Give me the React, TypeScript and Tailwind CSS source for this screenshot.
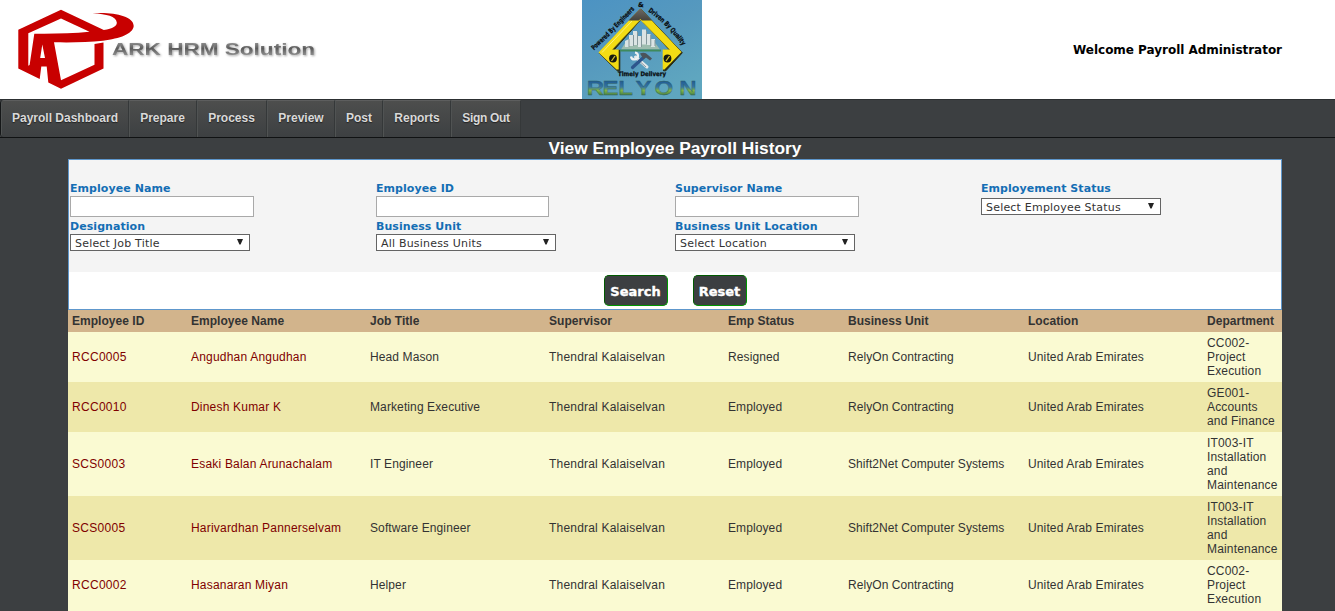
import React from "react";

const NAV = [
  { label: "Payroll Dashboard", w: "w-[128px]" },
  { label: "Prepare", w: "w-[68px] pr-px" },
  { label: "Process", w: "w-[70px] pr-px" },
  { label: "Preview", w: "w-[68px]" },
  { label: "Post", w: "w-[48px]" },
  { label: "Reports", w: "w-[68px]" },
  { label: "Sign Out", w: "w-[70px] tracking-[-0.3px]" },
];

const HEAD = ["Employee ID", "Employee Name", "Job Title", "Supervisor", "Emp Status", "Business Unit", "Location", "Department"];

const ROWS = [
  ["RCC0005", "Angudhan Angudhan", "Head Mason", "Thendral Kalaiselvan", "Resigned", "RelyOn Contracting", "United Arab Emirates", "CC002-\nProject\nExecution"],
  ["RCC0010", "Dinesh Kumar K", "Marketing Executive", "Thendral Kalaiselvan", "Employed", "RelyOn Contracting", "United Arab Emirates", "GE001-\nAccounts\nand Finance"],
  ["SCS0003", "Esaki Balan Arunachalam", "IT Engineer", "Thendral Kalaiselvan", "Employed", "Shift2Net Computer Systems", "United Arab Emirates", "IT003-IT\nInstallation\nand\nMaintenance"],
  ["SCS0005", "Harivardhan Pannerselvam", "Software Engineer", "Thendral Kalaiselvan", "Employed", "Shift2Net Computer Systems", "United Arab Emirates", "IT003-IT\nInstallation\nand\nMaintenance"],
  ["RCC0002", "Hasanaran Miyan", "Helper", "Thendral Kalaiselvan", "Employed", "RelyOn Contracting", "United Arab Emirates", "CC002-\nProject\nExecution"],
];

const CELL = [
  "text-[#800000] tracking-[0.3px]",
  "text-[#800000] tracking-[0.2px]",
  "tracking-[0.11px]",
  "tracking-[0.2px]",
  "tracking-[0.1px]",
  "tracking-[0.06px]",
  "tracking-[0.13px]",
  "tracking-[0.17px]",
];

const GRID = "grid grid-cols-[119px_179px_179px_179px_120px_180px_179px_79px] items-center pl-1";

function ArkLogo() {
  return (
    <svg width="330" height="98" viewBox="0 0 330 98" className="shrink-0">
      <defs>
        <linearGradient id="steel" x1="0" y1="0" x2="0" y2="1">
          <stop offset="0.2" stopColor="#8a8a8a" />
          <stop offset="0.5" stopColor="#5c5c5c" />
          <stop offset="0.85" stopColor="#8c8c8c" />
        </linearGradient>
      </defs>
      <path
        fill="#c80000"
        fillRule="evenodd"
        d="M18.300 29.700L61 9.700L103.800 30C113 28.500 117 26 116.800 22.500C116 16.500 107 14 92.500 13.300C112 11.800 133.700 15.500 133.700 26C133 34 120 38.500 103 40.700C88 42.500 70 42.500 54 42.300L61 80.300L94.500 64.700V44L103.500 42.500V68.500L61 88.800L48.300 82.500L46.700 66.500H41.300L39.700 79L18.300 68.500ZM28.300 33.200V65.700L29.600 65L34.300 33.700C52 33.800 72 33.800 89.500 31.800L61 18.500ZM42.300 44.500L40.200 58H45Z"
      />
      <text x="112" y="54.500" textLength="203" lengthAdjust="spacingAndGlyphs" fontFamily="Liberation Sans" fontWeight="bold" fontSize="16.500" fill="url(#steel)" className="drop-shadow-[1px_1px_1px_rgba(0,0,0,0.35)]">ARK HRM Solution</text>
    </svg>
  );
}

function RelyonLogo() {
  return (
    <svg width="120" height="99" viewBox="0 0 120 99" className="shrink-0">
      <defs>
        <linearGradient id="sky" x1="0" y1="0" x2="0.6" y2="1">
          <stop offset="0" stopColor="#4c93c3" />
          <stop offset="0.5" stopColor="#5699be" />
          <stop offset="1" stopColor="#5fa6bf" />
        </linearGradient>
        <linearGradient id="relyon" x1="0" y1="0" x2="0" y2="1">
          <stop offset="0.2" stopColor="#235f96" />
          <stop offset="0.42" stopColor="#3575a0" />
          <stop offset="0.58" stopColor="#82b446" />
          <stop offset="0.85" stopColor="#2f6a4a" />
        </linearGradient>
        <linearGradient id="cap" x1="0" y1="0" x2="0" y2="1">
          <stop offset="0" stopColor="#6e6a66" />
          <stop offset="1" stopColor="#45433c" />
        </linearGradient>
        <path id="leftArc" d="M12 50.500Q30 33.500 54 8" />
        <path id="rightArc" d="M66 11.500Q84 23 101 46.500" />
      </defs>
      <rect width="120" height="99" fill="url(#sky)" />
      <path d="M58.300 8.500L16.500 52.500L34.500 70H37V49.500H31L58.300 18.500L87 49.500H80.700V70H83L99.500 52Z" fill="#2a2c12" stroke="#2a2c12" transform="translate(0.800 0.800)" />
      <path d="M58.300 8.500L16.500 52.500L34.500 69.500H36.700V49.500H30.500L58.300 20L87.500 49.500H80.700V69.500H82.500L99.500 52Z" fill="#f3dc14" />
      <path d="M20 52.500L50 21" stroke="#fbf07a" strokeWidth="1" />
      <path d="M30.500 49.500L57 21.500M87.500 49.500L61 22.500" stroke="#8d7d12" strokeWidth="0.600" />
      <path d="M58.300 8.300L46.500 20.500H56.900L58.300 19L59.800 20.500H70Z" fill="url(#cap)" />
      <g fill="#17190f"><circle cx="31" cy="58.500" r="3.900" /><circle cx="85.500" cy="58.500" r="3.900" /></g>
      <path d="M29.500 61L33 56M84 61L87.500 56" stroke="#d8c32b" strokeWidth="1.300" />
      <path d="M45 40H71L78 49.500H39Z" fill="#9dbcae" />
      <path d="M43 41l4-2v8h-4zM47 35h4v11h-4zM51 31h4v14h-4zM56 36h3v11h-3zM60 29.500h4v15h-4zM65 34h3.500v11h-3.500zM69 39h4v8h-4z" fill="#dbe4e4" />
      <path d="M47 39v8M51.500 35v11M55.500 32v13M59.500 36v11M64.500 31v13M68.800 35v11M73 40v6" stroke="#84979b" strokeWidth="1" />
      <path d="M38 50.500H79" stroke="#3f8a5c" strokeWidth="1.800" />
      <path d="M53.500 57L65 67" stroke="#e3e8ea" strokeWidth="3" strokeLinecap="round" />
      <path d="M54.500 58.500L64 67" stroke="#8c989f" strokeWidth="1" />
      <path d="M62 57L50.500 67.500" stroke="#2d568c" strokeWidth="3.200" strokeLinecap="round" />
      <path d="M58 53.500Q63 51.500 66 55L70 58.500L68 60.500L64 57.500L61.500 59" fill="#4b535a" />
      <path d="M53 52.500A3.500 3.500 0 1 1 49 56.500" fill="none" stroke="#eef1f2" strokeWidth="2.200" />
      <g fontFamily="DejaVu Sans" fontWeight="bold" fontSize="6.800" fill="#080b0d" stroke="#080b0d" strokeWidth="0.250">
        <text><textPath href="#leftArc" textLength="58" lengthAdjust="spacingAndGlyphs">Powered By Engineers</textPath></text>
        <text x="56" y="6.500" fontSize="6.500">&amp;</text>
        <text><textPath href="#rightArc" textLength="49" lengthAdjust="spacingAndGlyphs">Driven By Quality</textPath></text>
        <text x="36" y="76" textLength="48" lengthAdjust="spacingAndGlyphs" fontSize="6.200">Timely Delivery</text>
      </g>
      <text transform="scale(1.200 1)" x="4 17 30.200 44.500 60.500 81" y="95.500" fontFamily="Liberation Sans" fontWeight="bold" fontSize="20" fill="url(#relyon)" stroke="#2c5d62" strokeWidth="0.300">RELYON</text>
    </svg>
  );
}

function Label({ children }: { children: React.ReactNode }) {
  return <div className="h-[14px] pt-px font-['DejaVu_Sans',sans-serif] text-[11px] leading-[14px] font-bold tracking-[0.06px] whitespace-nowrap text-[#146eb4]">{children}</div>;
}

function TextField({ label, w }: { label: string; w: string }) {
  return (
    <label className="block h-[38px]">
      <Label>{label}</Label>
      <input className={`mt-[1px] block h-[21px] border border-[#a9a9a9] bg-white ${w}`} />
    </label>
  );
}

function SelectField({ label, value, gap }: { label: string; value: string; gap: string }) {
  return (
    <div>
      <Label>{label}</Label>
      <div className={`flex h-[17px] w-[180px] items-center justify-between border border-[#646464] bg-white pr-[6px] pl-1 font-['DejaVu_Sans',sans-serif] text-[11px] leading-[15px] tracking-[0.2px] text-[#333] ${gap}`}>
        <span className="pt-[2px]">{value}</span>
        <svg width="6" height="7" viewBox="0 0 6 7" className="mb-[2px]"><path d="M0 1H6L3.600 6.500H2.400Z" fill="#222" /></svg>
      </div>
    </div>
  );
}

const BUTTON = "h-[31px] rounded-[5px] border border-t-[#005a00] border-r-[#009600] border-b-[#009600] border-l-[#005a00] bg-[#3c3f41] pt-[2px] [-webkit-text-stroke:0.35px_white]";

export default function App() {
  return (
    <div className="h-[611px] w-[1335px] overflow-hidden bg-[#3c3f41] font-['Liberation_Sans',Arial,sans-serif] text-xs text-[#333]">
      <header className="flex h-[99px] bg-white">
        <div className="w-[582px]"><ArkLogo /></div>
        <RelyonLogo />
        <div className="flex-1 pt-[42px] pr-[53px] text-right font-['DejaVu_Sans',sans-serif] text-xs leading-4 font-bold tracking-[-0.03px] text-black">Welcome Payroll Administrator</div>
      </header>

      <nav className="flex h-[39px] border-t border-b border-t-[#2c2f31] border-b-[#101213]">
        <div className="flex overflow-hidden rounded-l-[4px] border-l border-l-[#151718]">
          {NAV.map((item) => (
            <a key={item.label} className={`flex h-[37px] items-center justify-center border-t border-r border-l border-t-[#5d5e5e] border-r-[#353839] border-l-[#505353] bg-linear-to-b from-[#4d4e4d] to-[#3d4042] pb-[2px] font-bold whitespace-nowrap text-[#d9d9d9] [text-shadow:0_1px_1px_#222] ${item.w}`}>{item.label}</a>
          ))}
        </div>
      </nav>

      <main className="ml-[68px] w-[1214px]">
        <h1 className="h-[21px] text-center text-[17.33px] leading-[21px] font-bold text-white">View Employee Payroll History</h1>
        <section className="h-[151px] border border-[#5e97cc] bg-white">
          <div className="grid h-[112px] grid-cols-[306px_299px_306px_1fr] content-start bg-[#f4f4f4] pt-[21px] pl-[1px]">
            <TextField label="Employee Name" w="w-[184px]" />
            <TextField label="Employee ID" w="w-[173px]" />
            <TextField label="Supervisor Name" w="w-[184px]" />
            <SelectField label="Employement Status" value="Select Employee Status" gap="mt-[3px]" />
            <SelectField label="Designation" value="Select Job Title" gap="mt-[1px]" />
            <SelectField label="Business Unit" value="All Business Units" gap="mt-[1px]" />
            <SelectField label="Business Unit Location" value="Select Location" gap="mt-[1px]" />
          </div>
          <div className="flex justify-center gap-[25px] pt-[3px] font-['DejaVu_Sans',sans-serif] text-[13px] font-bold text-white">
            <button className={`w-[64px] ${BUTTON}`}>Search</button>
            <button className={`w-[54px] ${BUTTON}`}>Reset</button>
          </div>
        </section>
        <div className={`${GRID} h-[22px] bg-[#d2b48c] font-bold tracking-[0.03px]`}>
          {HEAD.map((h) => <div key={h}>{h}</div>)}
        </div>
        {ROWS.map((row, r) => (
          <div key={row[0]} className={`${GRID} py-1 leading-[14px] ${r % 2 ? "bg-[#eee8aa]" : "bg-[#fafad2]"}`}>
            {row.map((cell, c) => <div key={c} className={`whitespace-pre ${CELL[c]}`}>{cell}</div>)}
          </div>
        ))}
        <div className="h-px bg-[#fafad2]" />
      </main>
    </div>
  );
}
